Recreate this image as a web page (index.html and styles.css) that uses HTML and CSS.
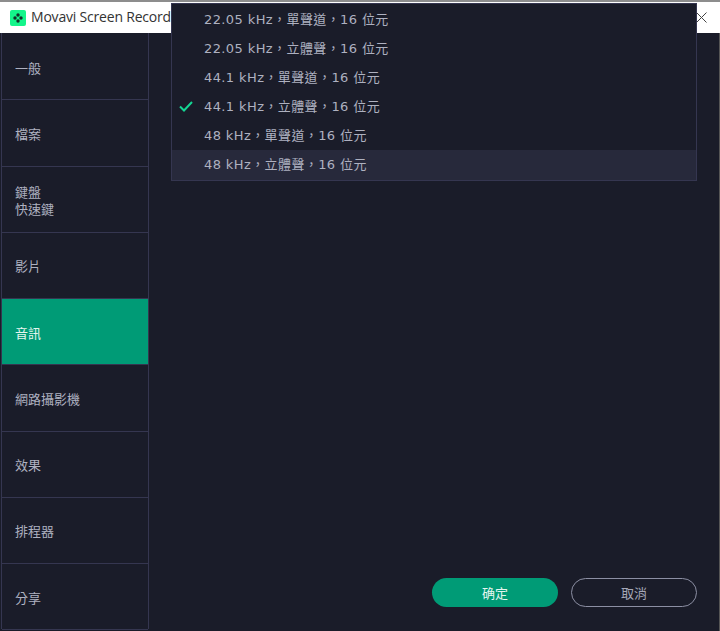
FILE: index.html
```html
<!DOCTYPE html>
<html lang="zh-Hant">
<head>
  <meta charset="UTF-8" />
  <title>Movavi Screen Recorder</title>
  <link rel="stylesheet" href="styles.css">
</head>
<body>
  <div class="window">
    <div class="titlebar">
      <svg class="logo" width="16" height="16" viewBox="0 0 16 16">
        <rect width="16" height="16" rx="2" fill="#14f58a"/>
        <circle cx="8" cy="5" r="1.7" fill="#10302a"/>
        <circle cx="8" cy="11" r="1.7" fill="#10302a"/>
        <circle cx="5" cy="8" r="1.7" fill="#10302a"/>
        <circle cx="11" cy="8" r="1.7" fill="#10302a"/>
      </svg>
      <span class="title">Movavi Screen Recorder</span>
      <svg class="close" width="11" height="11" viewBox="0 0 11 11">
        <path d="M0.5 0.5 10.5 10.5 M10.5 0.5 0.5 10.5" stroke="#444" stroke-width="1" fill="none"/>
      </svg>
    </div>
    <div class="content">
      <nav class="sidebar">
        <div class="nav-item">一般</div>
        <div class="nav-item">檔案</div>
        <div class="nav-item nav-two-line"><div>鍵盤</div><div>快速鍵</div></div>
        <div class="nav-item">影片</div>
        <div class="nav-item active">音訊</div>
        <div class="nav-item">網路攝影機</div>
        <div class="nav-item">效果</div>
        <div class="nav-item">排程器</div>
        <div class="nav-item">分享</div>
      </nav>
      <div class="main">
        <div class="buttons">
          <button class="btn btn-ok">确定</button>
          <button class="btn btn-cancel">取消</button>
        </div>
      </div>
    </div>
    <ul class="dropdown">
      <li>22.05 kHz，單聲道，16 位元</li>
      <li>22.05 kHz，立體聲，16 位元</li>
      <li>44.1 kHz，單聲道，16 位元</li>
      <li>
        <svg class="check" width="14" height="11" viewBox="0 0 14 11">
          <path d="M1 5.5 5 9.5 13 1" stroke="#14d693" stroke-width="2" fill="none"/>
        </svg>
        44.1 kHz，立體聲，16 位元
      </li>
      <li>48 kHz，單聲道，16 位元</li>
      <li class="hover">48 kHz，立體聲，16 位元</li>
    </ul>
  </div>
</body>
</html>
```

FILE: styles.css
```css
* {
  box-sizing: border-box;
}
body {
  margin: 0;
  background: #2b2b33;
  font-family: "Noto Sans CJK TC", "Noto Sans", sans-serif;
}
.window {
  position: relative;
  width: 720px;
  height: 631px;
  overflow: hidden;
  padding-top: 2px;
  background: #8d8d8d;
}
.titlebar {
  display: flex;
  align-items: center;
  height: 31px;
  padding-left: 10px;
  background: #fff;
}
.title {
  margin-left: 5px;
  margin-bottom: 2px;
  font-family: "Open Sans", "Noto Sans", sans-serif;
  font-size: 14px;
  letter-spacing: -0.2px;
  color: #333;
  white-space: nowrap;
}
.close {
  margin-left: auto;
  margin-right: 13px;
}
.content {
  display: flex;
  height: 598px;
  background: #1a1c29;
  border-right: 1px solid #555;
}
.sidebar {
  width: 148px;
  height: 596px;
  margin-left: 1px;
  padding-top: 1px;
  border-left: 1px solid #353650;
  border-right: 1px solid #353650;
}
.nav-item {
  display: flex;
  align-items: center;
  height: 66.25px;
  padding-left: 13px;
  padding-top: 1px;
  border-bottom: 1px solid #353650;
  font-size: 13px;
  line-height: 17px;
  color: #aeb1c0;
}
.nav-two-line {
  display: block;
  padding-top: 16px;
}
.nav-item.active {
  background: #009b76;
  color: #e4f5ef;
}
.main {
  flex: 1;
  display: flex;
  align-items: flex-end;
  justify-content: flex-end;
}
.buttons {
  display: flex;
  gap: 13px;
  padding: 0 22px 24px 0;
}
.btn {
  width: 126px;
  height: 29px;
  border-radius: 15px;
  font-family: inherit;
  font-size: 13px;
  padding: 0;
}
.btn-ok {
  border: none;
  background: #009b76;
  color: #e4f5ef;
}
.btn-cancel {
  border: 1px solid #8c8fa3;
  background: transparent;
  color: #a5a8b8;
}
.dropdown {
  position: absolute;
  top: 3px;
  left: 171px;
  width: 526px;
  height: 178px;
  margin: 0;
  padding: 1px 0;
  list-style: none;
  background: #1a1c29;
  border: 1px solid #353650;
}
.dropdown li {
  position: relative;
  height: 29.1px;
  padding-left: 32px;
  font-family: "DejaVu Sans", "Noto Sans CJK TC", sans-serif;
  font-size: 13px;
  line-height: 29px;
  letter-spacing: 0.4px;
  color: #aeb1c0;
  white-space: nowrap;
}
.dropdown li.hover {
  background: #27293b;
}
.check {
  position: absolute;
  left: 7px;
  top: 9px;
}
```
